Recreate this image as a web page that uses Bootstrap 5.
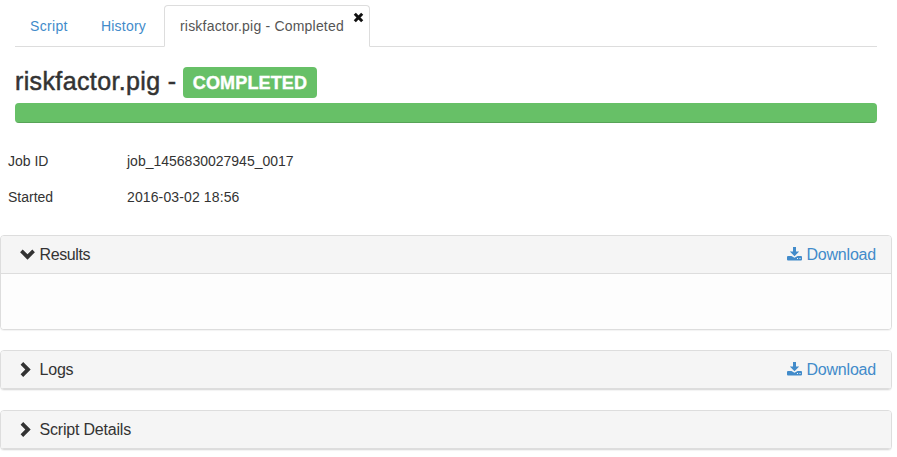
<!DOCTYPE html>
<html lang="en">
<head>
<meta charset="utf-8">
<meta name="viewport" content="width=device-width, initial-scale=1">
<title>riskfactor.pig - Completed</title>
<link href="https://cdn.jsdelivr.net/npm/bootstrap@5.3.0/dist/css/bootstrap.min.css" rel="stylesheet">
<style>
body{font:14px/20px "Liberation Sans",Arial,sans-serif;color:#333;background:#fff;overflow:hidden}
a,.nav-link{color:#428bca;text-decoration:none}
.job-tabs{margin:5px 20px 0 15px;border-bottom:1px solid #ddd;height:42px;flex-wrap:nowrap}
.job-tabs .nav-link{padding:10px 0 10px 14px;height:42px;line-height:20px;border-radius:4px 4px 0 0;white-space:nowrap;letter-spacing:.2px}
.job-tabs .tab-script{width:71px;letter-spacing:.33px}
.tab-history{width:78px}
.job-tabs .tab-job{width:206px;padding-left:15px}
.job-tabs .nav-link.active{color:#555;border-color:#ddd #ddd #fff}
.tab-close{top:7px;right:6px;width:11px;height:11px;line-height:0}
.job-head{margin:20px 20px 0 15px}
.job-title{font-size:25px;line-height:28px;font-weight:400;height:31px;-webkit-text-stroke:.5px #333;white-space:nowrap}
.job-title .title-text{width:168px;letter-spacing:.37px}
.state-label{font-size:18px;line-height:32px;height:31px;width:134px;padding:0;background:#67c067;border-radius:4px;letter-spacing:.15px;-webkit-text-stroke:.4px #fff}
.job-progress{height:20px;margin-top:5px;border-radius:4px;--bs-progress-bar-bg:#67c067}
.job-progress .progress-bar{box-shadow:inset 0 -1px 0 rgba(0,0,0,.15)}
.job-info{margin:20px 0 0;padding-left:8px}
.job-info dt,.job-info dd{font-weight:400;margin:0;line-height:20px;padding:8px 0}
.job-info dt{width:119px}
.job-info .started{letter-spacing:.12px}
.job-panel{width:892px;border:1px solid #ddd;border-radius:4px;box-shadow:0 1px 1px rgba(0,0,0,.05);margin-bottom:20px;overflow:hidden}
.job-panel .card-header{background:#f5f5f5;border-color:#ddd;font-size:16px;line-height:18px;height:38px;padding:0 15px 0 18px;border-radius:0;letter-spacing:-.2px}
.job-panel .card-body{height:55px;flex:none;background:#fdfdfd;padding:0}
.results-title{letter-spacing:-.4px}
.chev{width:20.500px;line-height:0}
.chev-open svg{transform:rotate(90deg)}
.chev-closed svg{margin-left:-1px}
.save-link{gap:4px;letter-spacing:-.2px}
.save-link svg{margin-top:-2px}
</style>
</head>
<body>
<svg class="d-none">
<symbol id="chevron" viewBox="0 0 16 16"><path d="M2.600 2.700 5.200.1 12.700 7.500 5.200 14.900 2.600 12.300 7.300 7.500Z" fill="#333"/></symbol>
<symbol id="download" viewBox="0 0 15 14"><path d="M6 0h3v4.500h3.200L7.500 9.200 2.800 4.500H6ZM1 9h3.400l3.100 1.700L10.600 9H14q1 0 1 1v2.500q0 1-1 1H1q-1 0-1-1V10q0-1 1-1Zm9 2v1h1v-1Zm2.500 0v1h1v-1Z" fill="#428bca" fill-rule="evenodd"/></symbol>
</svg>
<ul class="nav nav-tabs job-tabs">
<li class="nav-item"><a class="nav-link tab-script" href="#">Script</a></li>
<li class="nav-item"><a class="nav-link tab-history" href="#">History</a></li>
<li class="nav-item position-relative"><a class="nav-link tab-job active" href="#">riskfactor.pig - Completed</a>
<span class="tab-close position-absolute"><svg width="11" height="11" viewBox="0 0 11 11"><path d="M1.800 1.800 9.200 9.200M9.200 1.800 1.800 9.200" stroke="#111" stroke-width="3"/></svg></span></li>
</ul>
<header class="job-head">
<h1 class="job-title d-flex mb-0"><span class="title-text">riskfactor.pig -</span><span class="badge state-label">COMPLETED</span></h1>
<div class="progress job-progress"><div class="progress-bar w-100"></div></div>
</header>
<dl class="job-info">
<div class="d-flex"><dt>Job ID</dt><dd>job_1456830027945_0017</dd></div>
<div class="d-flex"><dt>Started</dt><dd class="started">2016-03-02 18:56</dd></div>
</dl>
<main class="mt-3 pt-1">
<section class="card job-panel">
<div class="card-header d-flex align-items-center"><span class="chev chev-open"><svg width="16" height="16"><use href="#chevron"/></svg></span><span class="results-title">Results</span>
<a class="ms-auto d-flex align-items-center save-link" href="#"><svg width="15" height="14"><use href="#download"/></svg>Download</a></div>
<div class="card-body"></div>
</section>
<section class="card job-panel">
<div class="card-header d-flex align-items-center"><span class="chev chev-closed"><svg width="16" height="16"><use href="#chevron"/></svg></span><span>Logs</span>
<a class="ms-auto d-flex align-items-center save-link" href="#"><svg width="15" height="14"><use href="#download"/></svg>Download</a></div>
</section>
<section class="card job-panel">
<div class="card-header d-flex align-items-center"><span class="chev chev-closed"><svg width="16" height="16"><use href="#chevron"/></svg></span><span>Script Details</span></div>
</section>
</main>
</body>
</html>
